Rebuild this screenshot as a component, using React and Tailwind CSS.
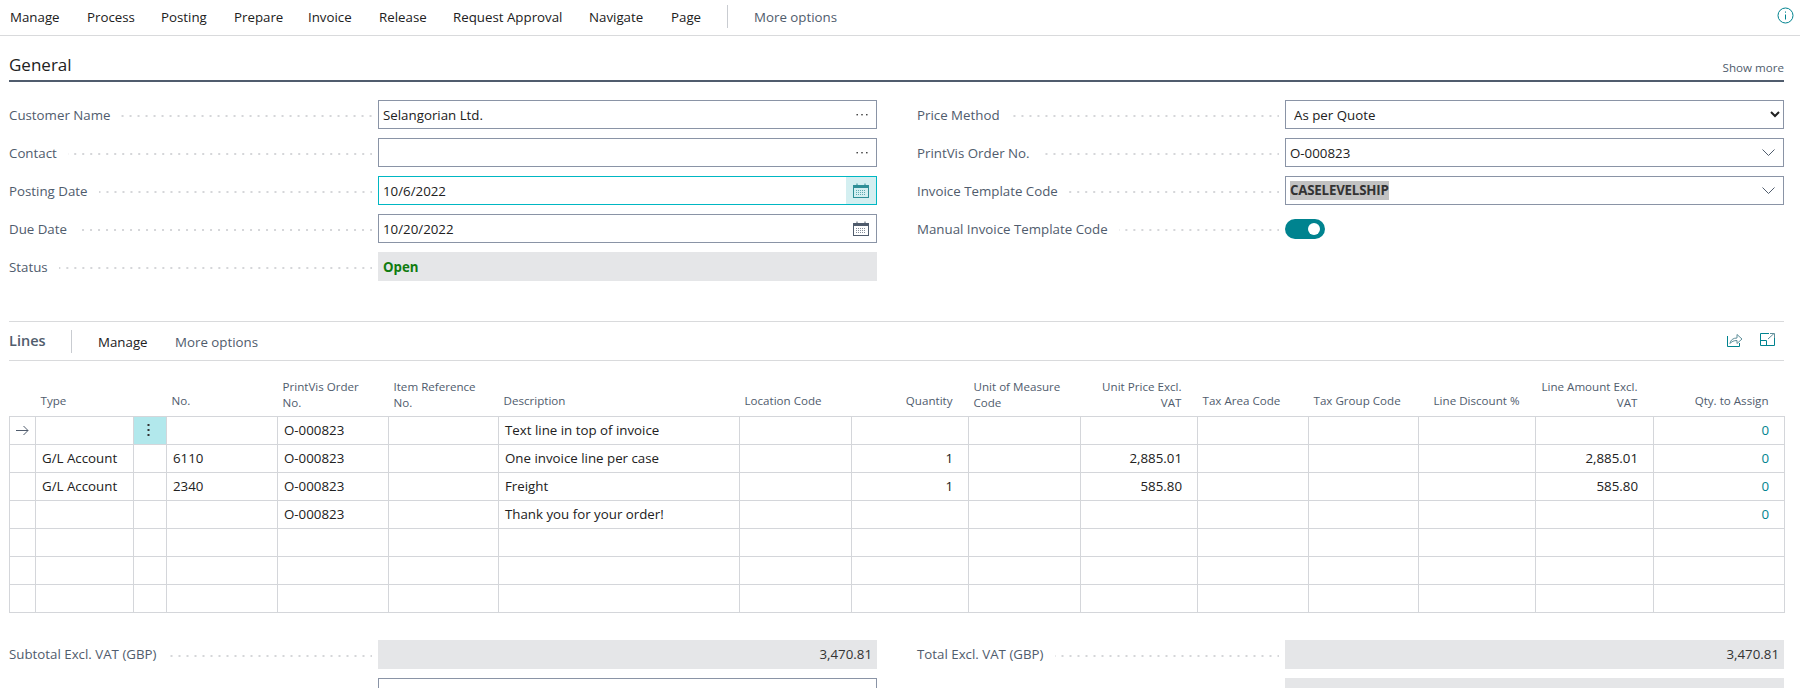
// App: sales invoice card with General section, Lines grid and totals
import React from 'react';

const navItems = [
  ['Manage', 'w-[77px]'],
  ['Process', 'w-[74px]'],
  ['Posting', 'w-[73px]'],
  ['Prepare', 'w-[74px]'],
  ['Invoice', 'w-[71px]'],
  ['Release', 'w-[74px]'],
  ['Request Approval', 'w-[136px]'],
  ['Navigate', 'w-[82px]'],
  ['Page', 'w-[56px]'],
];

const columns = [
  { width: 'w-[26px]', head: [] },
  { width: 'w-[98px]', head: ['Type'] },
  { width: 'w-[33px]', head: [] },
  { width: 'w-[111px]', head: ['No.'] },
  { width: 'w-[111px]', head: ['PrintVis Order', 'No.'] },
  { width: 'w-[110px]', head: ['Item Reference', 'No.'] },
  { width: 'w-[241px]', head: ['Description'] },
  { width: 'w-[112px]', head: ['Location Code'] },
  { width: 'w-[117px]', head: ['Quantity'], right: true },
  { width: 'w-[112px]', head: ['Unit of Measure', 'Code'] },
  { width: 'w-[117px]', head: ['Unit Price Excl.', 'VAT'], right: true },
  { width: 'w-[111px]', head: ['Tax Area Code'] },
  { width: 'w-[110px]', head: ['Tax Group Code'] },
  { width: 'w-[117px]', head: ['Line Discount %'], right: true },
  { width: 'w-[118px]', head: ['Line Amount Excl.', 'VAT'], right: true },
  { width: 'w-[131px]', head: ['Qty. to Assign'], right: true },
];

// cell values by column index, 0 and 2 are the arrow and row menu columns
const rows = [
  { arrow: true, cells: { 4: 'O-000823', 6: 'Text line in top of invoice', 15: '0' } },
  { cells: { 1: 'G/L Account', 3: '6110', 4: 'O-000823', 6: 'One invoice line per case', 8: '1', 10: '2,885.01', 14: '2,885.01', 15: '0' } },
  { cells: { 1: 'G/L Account', 3: '2340', 4: 'O-000823', 6: 'Freight', 8: '1', 10: '585.80', 14: '585.80', 15: '0' } },
  { cells: { 4: 'O-000823', 6: 'Thank you for your order!', 15: '0' } },
  { cells: {} },
  { cells: {} },
  { cells: {} },
];

function InfoIcon() {
  return (
    <svg width="17" height="17" viewBox="0 0 17 17" fill="none" stroke="#00838f" className="mb-[2px]">
      <circle cx="8.5" cy="8.5" r="7.5" />
      <path d="M8.5 7.5v5M8.5 4.5v1.2" />
    </svg>
  );
}

function Dots() {
  return (
    <svg width="12" height="3" viewBox="0 0 12 3" fill="#333">
      <rect x="0.5" y="1" width="1.4" height="1.4" />
      <rect x="5.3" y="1" width="1.4" height="1.4" />
      <rect x="10.1" y="1" width="1.4" height="1.4" />
    </svg>
  );
}

function CalendarIcon({ color }) {
  return (
    <svg width="16" height="15" viewBox="0 0 16 15" fill="none" stroke={color}>
      <rect x="0.5" y="2.5" width="15" height="12" />
      <path d="M1 3.5h14M1 4.5h14" />
      <path d="M4 0.5v2M12 0.5v2" />
      <path d="M3 7.5h10M3 9.5h10M3 11.5h10" strokeDasharray="1 1" opacity="0.7" />
    </svg>
  );
}

function Chevron() {
  return (
    <svg width="13" height="7" viewBox="0 0 13 7" fill="none" stroke="#505c6d">
      <path d="M0.5 0.5l6 6 6-6" />
    </svg>
  );
}

function Leader() {
  return (
    <div className="h-[2px] flex-1 mt-[3px] ml-[11px] bg-right bg-[linear-gradient(to_left,#d5d6d9_2px,transparent_2px)] bg-[length:8px_2px]" />
  );
}

function Field({ label, right, children }) {
  return (
    <div className="flex items-center h-[29px] mb-[9px]">
      <div className={`${right ? 'w-[368px]' : 'w-[369px]'} shrink-0 flex items-center pr-[6px] text-[#505c6d]`}>
        <span>{label}</span>
        <Leader />
      </div>
      {children}
    </div>
  );
}

function Box({ children, focused, className = '' }) {
  return (
    <div
      className={`flex-1 h-[29px] flex items-center bg-white border ${
        focused ? 'border-[#00b7c3]' : 'border-[#8a94a6]'
      } ${className}`}
    >
      {children}
    </div>
  );
}

function TextBox({ value, icon, focused }) {
  return (
    <Box focused={focused} className="pl-[4px]">
      <span className="flex-1 text-[#212121]">{value}</span>
      {icon}
    </Box>
  );
}

function DateIcon({ focused }) {
  return (
    <div className={`w-[30px] h-[27px] flex items-center justify-center ${focused ? 'bg-[#d4eff1]' : ''}`}>
      <CalendarIcon color={focused ? '#2f8f97' : '#505c6d'} />
    </div>
  );
}

function EllipsisIcon() {
  return (
    <div className="w-[28px] flex items-center justify-center">
      <Dots />
    </div>
  );
}

function ChevronIcon() {
  return (
    <div className="w-[30px] flex items-center justify-center">
      <Chevron />
    </div>
  );
}

function ReadOnlyBox({ value, right, bold }) {
  return (
    <div className={`flex-1 h-[29px] flex items-center px-[5px] bg-[#e5e6e8] ${right ? 'justify-end' : ''} ${bold ? 'font-bold text-[#107c10]' : 'text-[#333]'}`}>
      {value}
    </div>
  );
}

function LinesGrid() {
  return (
    <table className="table-fixed border-collapse w-[1775px] ml-[9px] mt-[14px]">
      <colgroup>
        {columns.map((c, i) => (
          <col key={i} className={c.width} />
        ))}
      </colgroup>
      <thead>
        <tr className="h-[41px]">
          {columns.map((c, i) => (
            <th
              key={i}
              className={`align-bottom font-normal text-[11.6px] leading-[16px] text-[#505c6d] ${
                c.right ? 'text-right pr-[16px]' : 'text-left pl-[5px]'
              } ${c.head.length > 1 ? 'pb-[5px]' : 'pb-[7px]'}`}
            >
              {c.head.map((line) => (
                <div key={line}>{line}</div>
              ))}
            </th>
          ))}
        </tr>
      </thead>
      <tbody>
        {rows.map((row, r) => (
          <tr key={r} className="h-[28px]">
            {columns.map((c, i) => (
              <td
                key={i}
                className={`border border-[#d4d6da] p-0 overflow-hidden whitespace-nowrap ${
                  c.right ? 'text-right pr-[15px]' : 'pl-[6px]'
                } ${i === 15 ? 'text-[#00838f]' : 'text-[#212121]'} ${
                  i === 2 && r === 0 ? 'bg-[#b2e8ec]' : ''
                }`}
              >
                {i === 0 && row.arrow && (
                  <svg width="13" height="11" viewBox="0 0 13 11" fill="none" stroke="#505c6d" className="mt-px">
                    <path d="M0 5.5h12M7.5 1l4.5 4.5-4.5 4.5" />
                  </svg>
                )}
                {i === 2 && r === 0 && (
                  <svg width="3" height="14" viewBox="0 0 3 14" fill="#333" className="-ml-[1px] translate-x-[8px]">
                    <rect x="0.5" y="1" width="2" height="2" />
                    <rect x="0.5" y="6" width="2" height="2" />
                    <rect x="0.5" y="11" width="2" height="2" />
                  </svg>
                )}
                {row.cells[i]}
              </td>
            ))}
          </tr>
        ))}
      </tbody>
    </table>
  );
}

function App() {
  return (
    <div className="w-[1800px] h-[688px] overflow-hidden bg-white text-[13.3px] leading-[18px] text-[#212121] font-['Open_Sans',sans-serif]">
      {/* action bar */}
      <div className="h-[36px] flex items-center pl-[10px] pr-[6px] pb-[2px] border-b border-[#d9dadc]">
        {navItems.map(([name, width]) => (
          <div key={name} className={width}>
            {name}
          </div>
        ))}
        <div className="w-px h-[23px] bg-[#c9ccd1]" />
        <div className="ml-[26px] flex-1 text-[#505c6d]">More options</div>
        <InfoIcon />
      </div>

      {/* General */}
      <div className="mx-[9px] mr-[16px] mt-[19px] h-[27px] border-b-2 border-[#505c6d] flex justify-between">
        <div className="text-[17px] leading-[22px] text-[#212121] -mt-[1px]">General</div>
        <div className="text-[11.6px] leading-[16px] text-[#505c6d] mt-[5px]">Show more</div>
      </div>

      <div className="flex gap-[40px] ml-[9px] mr-[16px] mt-[18px] h-[221px]">
        <div className="w-[868px]">
          <Field label="Customer Name">
            <TextBox value="Selangorian Ltd." icon={<EllipsisIcon />} />
          </Field>
          <Field label="Contact">
            <TextBox value="" icon={<EllipsisIcon />} />
          </Field>
          <Field label="Posting Date">
            <TextBox value="10/6/2022" focused icon={<DateIcon focused />} />
          </Field>
          <Field label="Due Date">
            <TextBox value="10/20/2022" icon={<DateIcon />} />
          </Field>
          <Field label="Status">
            <ReadOnlyBox value="Open" bold />
          </Field>
        </div>
        <div className="w-[867px]">
          <Field right label="Price Method">
            <select
              defaultValue="As per Quote"
              className="flex-1 h-[29px] bg-white border border-[#8a94a6] pl-[4px] text-[#212121] outline-none"
            >
              <option>As per Quote</option>
            </select>
          </Field>
          <Field right label="PrintVis Order No.">
            <TextBox value="O-000823" icon={<ChevronIcon />} />
          </Field>
          <Field right label="Invoice Template Code">
            <TextBox
              value={<span className="inline-block h-[19px] bg-[#c2c2c2] font-bold text-[#333] tracking-[-0.2px]">CASELEVELSHIP</span>}
              icon={<ChevronIcon />}
            />
          </Field>
          <Field right label="Manual Invoice Template Code">
            <div className="relative w-[40px] h-[20px] rounded-full bg-[#00838f]">
              <div className="absolute right-[5px] top-[4px] w-[12px] h-[12px] rounded-full bg-white" />
            </div>
          </Field>
        </div>
      </div>

      {/* Lines */}
      <div className="mx-[9px] mr-[16px] h-[40px] border-t border-b border-[#d9dadc] flex items-center">
        <div className="w-[62px] text-[14.5px] font-semibold text-[#505c6d]">Lines</div>
        <div className="w-px h-[23px] bg-[#c9ccd1]" />
        <div className="ml-[26px] mt-[2px] w-[77px]">Manage</div>
        <div className="flex-1 mt-[2px] text-[#505c6d]">More options</div>
        <svg width="16" height="15" viewBox="0 0 16 15" fill="none" stroke="#00838f" className="mb-[3px]">
          <path d="M0.5 4v10.5h12V11" />
          <path d="M3 11.5C3.5 8 6 6 10 6V2.5l5 4.5-5 4.5V8.5c-3 0-5.5 1-7 3z" stroke="#5f8f9a" />
        </svg>
        <svg width="15" height="13" viewBox="0 0 15 13" fill="none" stroke="#00838f" className="ml-[17px] mr-[9px] mb-[3px]">
          <path d="M9 0.5H0.5v12h14V3M0.5 7.5h6v5" />
          <path d="M8 6l6-5.5M10 0.5h4.5V5" stroke="#5f8f9a" />
        </svg>
      </div>

      <LinesGrid />

      {/* totals */}
      <div className="flex gap-[40px] ml-[9px] mr-[16px] mt-[27px]">
        <div className="w-[868px]">
          <Field label="Subtotal Excl. VAT (GBP)">
            <ReadOnlyBox value="3,470.81" right />
          </Field>
          <Field label="">
            <TextBox value="" />
          </Field>
        </div>
        <div className="w-[867px]">
          <Field right label="Total Excl. VAT (GBP)">
            <ReadOnlyBox value="3,470.81" right />
          </Field>
          <Field right label="">
            <ReadOnlyBox value="" />
          </Field>
        </div>
      </div>
    </div>
  );
}

export default App;
